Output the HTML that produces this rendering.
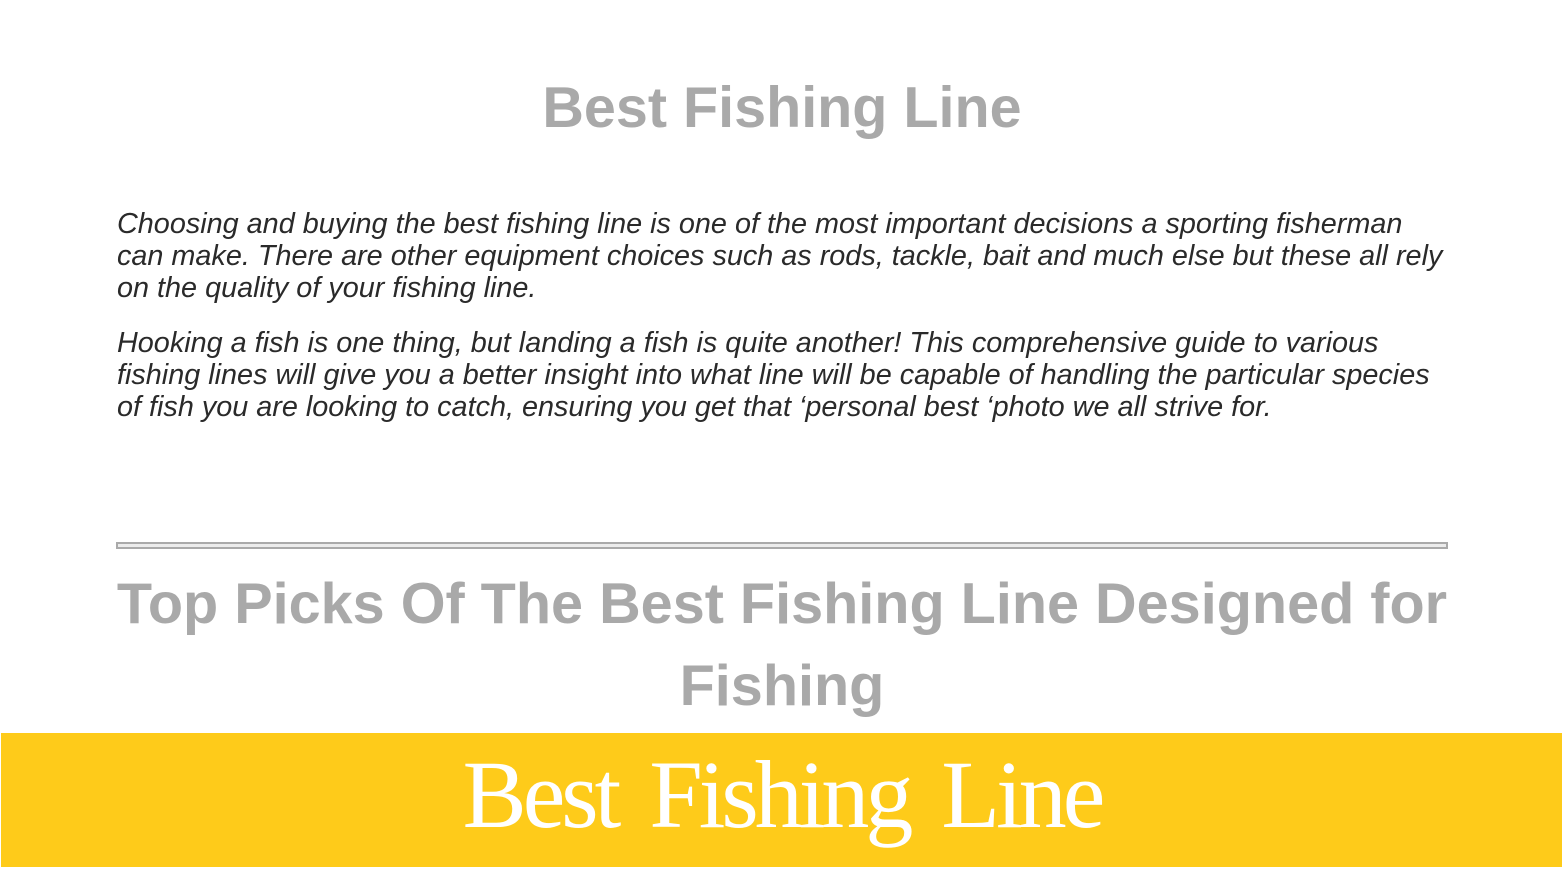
<!DOCTYPE html>
<html><head><meta charset="utf-8"><style>
html,body{margin:0;padding:0;background:#fff;width:1564px;height:896px;overflow:hidden;position:relative}
.h1{position:absolute;left:0;width:1564px;top:68px;text-align:center;font:bold 57.5px/80px "Liberation Sans",sans-serif;color:#a9a9a9}
.p{position:absolute;left:117px;width:1335px;font:italic 28.8px/32px "Liberation Sans",sans-serif;color:#2a2a2a;margin:0}
.rule{position:absolute;left:116px;top:542px;width:1328px;height:3px;border:2px solid #aaa;background:#ececec}
.h2{position:absolute;left:60px;width:1444px;top:563px;text-align:center;font:bold 57.6px/82px "Liberation Sans",sans-serif;color:#a9a9a9}
.band{position:absolute;left:1px;top:733px;width:1561px;height:134px;background:#fecb1a}
.bt{position:absolute;left:0;width:1564px;top:740px;text-align:center;font:96px/110px "Liberation Serif",serif;color:#fff;letter-spacing:-4px;word-spacing:12px}
</style></head><body>
<div class="h1">Best Fishing Line</div>
<p class="p" style="top:208px">Choosing and buying the best fishing line is one of the most important decisions a sporting fisherman can make. There are other equipment choices such as rods, tackle, bait and much else but these all rely on the quality of your fishing line.</p>
<p class="p" style="top:327px">Hooking a fish is one thing, but landing a fish is quite another! This comprehensive guide to various fishing lines will give you a better insight into what line will be capable of handling the particular species of fish you are looking to catch, ensuring you get that ‘personal best ‘photo we all strive for.</p>
<div class="rule"></div>
<div class="h2">Top Picks Of The Best Fishing Line Designed for Fishing</div>
<div class="band"></div>
<div class="bt">Best Fishing Line</div>
</body></html>
